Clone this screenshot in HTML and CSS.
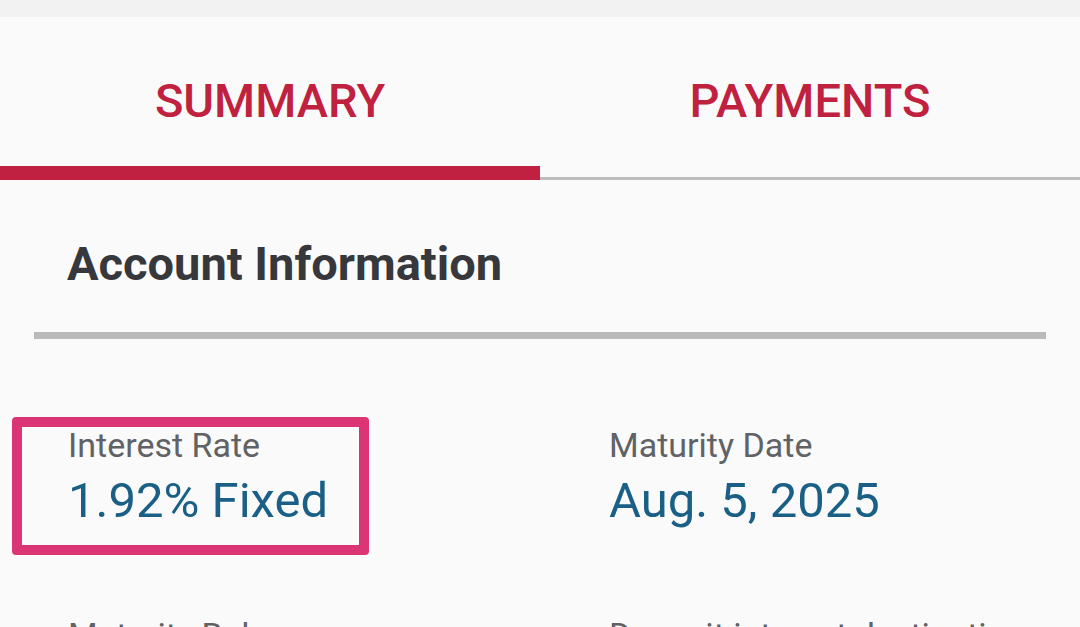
FILE: index.html
```html
<!DOCTYPE html>
<html lang="en">
<head>
<meta charset="utf-8">
<title>Account Summary</title>
<link rel="stylesheet" href="styles.css">
</head>
<body>
<div class="status-strip"></div>
<nav class="tabs">
  <div class="tab active">SUMMARY</div>
  <div class="tab">PAYMENTS</div>
</nav>
<main class="content">
  <h2 class="section-title">Account Information</h2>
  <div class="divider"></div>
  <div class="info-grid">
    <div class="info-item">
      <span class="highlight"></span>
      <div class="info-label">Interest Rate</div>
      <div class="info-value">1.92% Fixed</div>
    </div>
    <div class="info-item">
      <div class="info-label">Maturity Date</div>
      <div class="info-value">Aug. 5, 2025</div>
    </div>
    <div class="info-item">
      <div class="info-label">Maturity Balance</div>
      <div class="info-value">$0.00</div>
    </div>
    <div class="info-item">
      <div class="info-label">Deposit interest destination</div>
      <div class="info-value">Savings</div>
    </div>
  </div>
</main>
</body>
</html>
```

FILE: styles.css
```css
html, body {
  margin: 0;
  padding: 0;
}
body {
  width: 1080px;
  height: 627px;
  overflow: hidden;
  background: #fafafa;
  font-family: Roboto, "Liberation Sans", sans-serif;
}
.status-strip {
  height: 17px;
  background: #f2f2f2;
}
.tabs {
  display: flex;
}
.tab {
  flex: 1;
  box-sizing: border-box;
  height: 163px;
  padding-top: 56px;
  text-align: center;
  font-size: 47px;
  line-height: 56px;
  font-weight: 500;
  color: #c0213f;
  border-bottom: 3px solid #bdbdbd;
}
.tab.active {
  border-bottom: 14px solid #c12140;
}
.content {
  padding-top: 56px;
}
.section-title {
  margin: 0 0 0 67px;
  font-size: 47px;
  line-height: 56px;
  font-weight: 700;
  color: #37383c;
}
.divider {
  height: 7px;
  background: #b9bab9;
  margin: 40px 34px 0 34px;
}
.info-grid {
  display: grid;
  grid-template-columns: 50% 50%;
  row-gap: 84px;
  margin-top: 86px;
}
.info-item {
  position: relative;
  padding-left: 68px;
}
.info-item:nth-child(2n) {
  padding-left: 69px;
}
.info-label {
  font-size: 34px;
  line-height: 40px;
  color: #606265;
  white-space: nowrap;
}
.info-value {
  margin-top: 6px;
  font-size: 49px;
  line-height: 60px;
  color: #1a5f85;
  white-space: nowrap;
}
.highlight {
  position: absolute;
  left: 12px;
  top: -8px;
  width: 357px;
  height: 138px;
  box-sizing: border-box;
  border: 10px solid #dc3575;
  border-radius: 4px;
}
```
